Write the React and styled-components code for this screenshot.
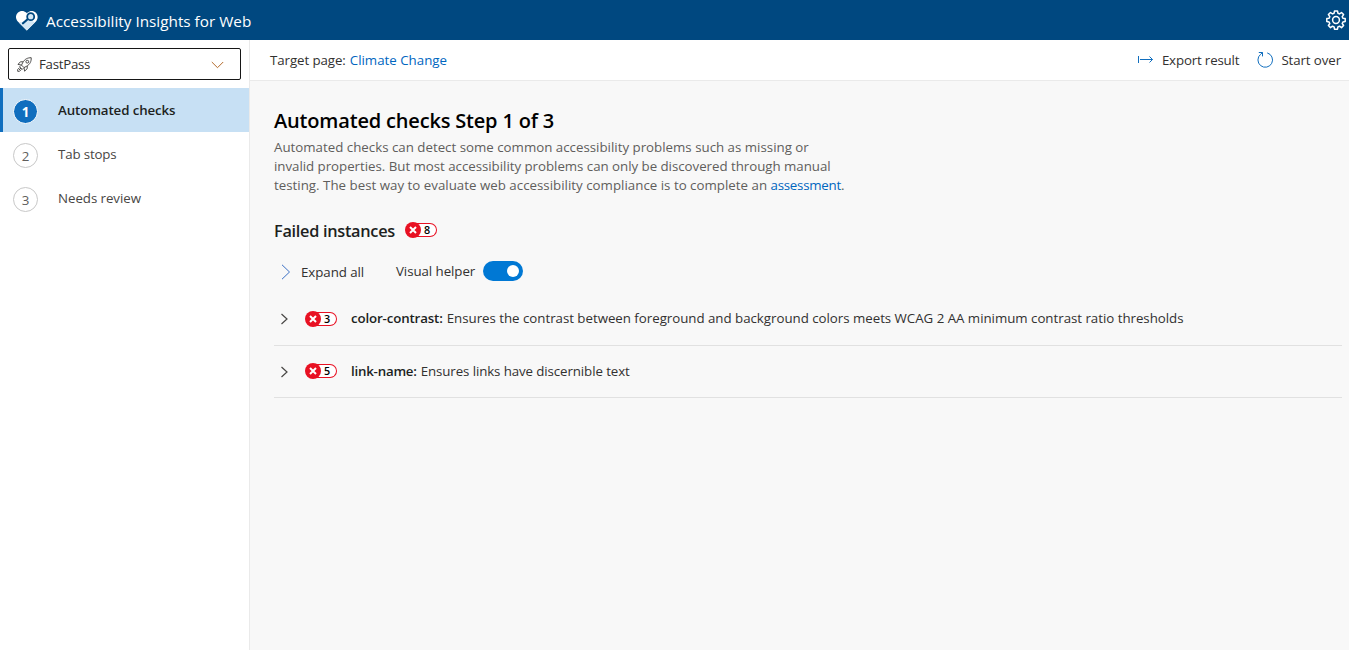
import React from "react";
import styled, { createGlobalStyle } from "styled-components";

const Global = createGlobalStyle`
  * { box-sizing: border-box; }
  html, body { margin: 0; padding: 0; background: #fff; }
  body { font-family: "Open Sans", "Noto Sans", sans-serif; font-size: 13.3px; color: #323130; }
  h1, h2, p, ul, ol { margin: 0; padding: 0; list-style: none; }
  svg { display: block; flex: none; }
`;

/* One run of text: size, weight, tracking and line height vary by use. */
const Text = styled.span`
  font-size: ${(p) => p.$size || 13.3}px;
  font-weight: ${(p) => p.$weight || 400};
  letter-spacing: ${(p) => p.$track || 0}px;
  line-height: ${(p) => p.$line || 20}px;
  color: ${(p) => p.$color || "inherit"};
  white-space: nowrap;
`;

const Page = styled.div`
  display: flex;
  flex-direction: column;
  width: 1349px;
  height: 650px;
  overflow: hidden;
`;
const Header = styled.header`
  display: flex;
  align-items: center;
  flex: none;
  height: 40px;
  padding: 0 3px 0 15px;
  background: #004880;
  color: #fff;
`;
const Brand = styled.div`
  display: flex;
  flex: 1;
  align-items: center;
  gap: 8px;
  padding-top: 2px;
  svg { margin-top: -2px; }
`;
const Body = styled.div`
  display: flex;
  flex: 1;
`;
const Sidebar = styled.nav`
  width: 250px;
  flex: none;
  border-right: 1px solid #eaeaea;
`;
const Select = styled.div`
  display: flex;
  align-items: center;
  height: 32px;
  margin: 8px 8px 8px;
  padding: 0 16px 0 8px;
  border: 1px solid #161616;
  border-radius: 2px;
  gap: 7px;
`;
const SelectLabel = styled.div`
  flex: 1;
  display: flex;
`;
const Step = styled.li`
  display: flex;
  align-items: center;
  height: 44px;
  padding-left: ${(p) => (p.$active ? 10 : 13)}px;
  border-left: ${(p) => (p.$active ? "3px solid #106ebe" : "0")};
  background: ${(p) => (p.$active ? "#c7e0f4" : "transparent")};
  color: ${(p) => (p.$active ? "#201f1e" : "#484644")};
  gap: 20px;
`;
const StepNumber = styled.div`
  display: flex;
  align-items: center;
  justify-content: center;
  width: 25px;
  height: 25px;
  margin-top: 3px;
  border: 1px solid ${(p) => (p.$active ? "#fff" : "#c8c8c8")};
  border-radius: 50%;
  background: ${(p) => (p.$active ? "#106ebe" : "#fff")};
  color: ${(p) => (p.$active ? "#fff" : "#605e5c")};
`;
const Main = styled.main`
  flex: 1;
  display: flex;
  flex-direction: column;
  min-width: 0;
`;
const CommandBar = styled.div`
  display: flex;
  align-items: center;
  height: 41px;
  padding: 0 8px 0 20px;
  border-bottom: 1px solid #eaeaea;
`;
const Target = styled.div`
  flex: 1;
  display: flex;
  gap: 4px;
`;
const Command = styled.div`
  display: flex;
  align-items: center;
  gap: ${(p) => p.$gap || 7}px;
  margin-left: 18px;
`;
const Content = styled.section`
  flex: 1;
  padding: 24px 7px 0 24px;
  background: #f8f8f8;
`;
const Title = styled.h1`
  display: flex;
  height: 33px;
`;
const Description = styled.p`
  display: flex;
  flex-direction: column;
  height: 57px;
`;
const Link = styled.span`
  color: #0066bf;
  letter-spacing: -0.25px;
`;
const Section = styled.h2`
  display: flex;
  align-items: center;
  gap: 10px;
  height: 30px;
  margin-top: 20px;
`;
const SectionLabel = styled.span`
  display: flex;
  padding-top: 2px;
`;
const Pill = styled.span`
  display: flex;
  align-items: center;
  width: 32px;
  height: 16px;
`;
const PillIcon = styled.span`
  position: relative;
  display: flex;
  align-items: center;
  justify-content: center;
  width: 16px;
  height: 16px;
  border-radius: 50%;
  background: #e81123;
`;
const PillCount = styled.span`
  display: flex;
  align-items: center;
  width: 24px;
  height: 14px;
  margin-left: -8px;
  padding-left: 11px;
  border: 1px solid #e81123;
  border-left: 0;
  border-radius: 0 8px 8px 0;
  background: #fff;
  color: #000;
`;
const Tools = styled.div`
  display: flex;
  align-items: center;
  height: 20px;
  margin-top: 16px;
  padding-left: 6.5px;
`;
const Expand = styled.div`
  display: flex;
  align-items: center;
  width: 115.5px;
  gap: 10.5px;
  padding-top: 2px;
`;
const Helper = styled.div`
  display: flex;
  align-items: center;
  gap: 8px;
`;
const Toggle = styled.div`
  display: flex;
  align-items: center;
  justify-content: flex-end;
  width: 40px;
  height: 20px;
  padding-right: 4px;
  border-radius: 10px;
  background: #0078d4;
`;
const Knob = styled.div`
  width: 12px;
  height: 12px;
  border-radius: 50%;
  background: #fff;
`;
const Rules = styled.ul`
  margin-top: 12px;
`;
const Rule = styled.li`
  display: flex;
  align-items: center;
  height: ${(p) => p.$height}px;
  padding-left: 6px;
  border-bottom: 1px solid #e1e1e1;
`;
const RuleBadge = styled.div`
  margin: 0 14px 0 16px;
  padding-bottom: ${(p) => p.$lift || 0}px;
`;
const RuleText = styled.div`
  display: flex;
  gap: 4px;
  padding-bottom: 2px;
`;

const Logo = () => (
  <svg width="23" height="21" viewBox="0 0 23 21">
    <path d="M11.800 20.500 2.800 11.500C.4 9 .4 5.100 2.800 2.700 5.200.4 8.900.4 11.200 2.600l.6.600.8-.7C15 .3 18.600.4 20.900 2.700c2.300 2.400 2.300 6.200 0 8.700Z" fill="#fff" />
    <path d="m3.800 12.500 8 8 8.200-8.200-3.500-1.500-7 .8Z" fill="#d5e8f5" />
    <path d="m8 13.300 5.200-4.600" stroke="#004880" strokeWidth="2.200" strokeLinecap="round" />
    <circle cx="15.700" cy="6.700" r="3.500" fill="#d5e8f5" stroke="#004880" strokeWidth="1.800" />
  </svg>
);
const Gear = () => (
  <svg width="20" height="20" viewBox="0 0 20 20" fill="none" stroke="#fff" strokeWidth="1.500" strokeLinejoin="round">
    <path d="M8.500.9h3l.4 2.300 1.600.7 2-1.400 2.100 2.100-1.400 2 .7 1.600 2.300.4v3l-2.300.4-.7 1.500 1.400 2-2.100 2.100-2-1.400-1.600.7-.4 2.300h-3l-.4-2.300-1.600-.7-2 1.400-2.100-2.100 1.400-2-.7-1.500L.8 11.600v-3l2.300-.4.7-1.600-1.400-2 2.100-2.100 2 1.400 1.600-.7Z" />
    <circle cx="10" cy="10" r="3.400" />
  </svg>
);
const Rocket = () => (
  <svg width="15" height="15" viewBox="0 0 15 15" fill="none" stroke="#3b3a39" strokeWidth="0.900">
    <path d="M14.200.7c-3.600 0-6.500 1.300-8.500 5L4.500 8.100l2.500 2.500 2.500-1.300c3.600-2 4.900-5 4.700-8.600Z" />
    <circle cx="10.300" cy="4.700" r="1.400" />
    <path d="M6.200 4.800H3.400L1 7.400l3.500.7M10.200 8.900v2.800l-2.600 2.500L7 10.600M3.800 8.600l-1.200 1.200 2.600 2.600 1.200-1.200M2.600 10.600.7 12.500v1.800h1.800l1.900-1.900M4 11 2 13" />
  </svg>
);
const Chevron = ({ w, h, d, color, stroke = 1 }) => (
  <svg width={w} height={h} viewBox={`0 0 ${w} ${h}`} fill="none" stroke={color} strokeWidth={stroke}>
    <path d={d} />
  </svg>
);
const ExportIcon = () => (
  <svg width="17" height="10" viewBox="0 0 17 10" fill="none" stroke="#106ebe">
    <path d="M1.500 1v7M3 4.500h12.500M12.500 1.500l3 3-3 3" />
  </svg>
);
const Restart = () => (
  <svg width="17" height="18" viewBox="0 0 17 18" fill="none" stroke="#106ebe">
    <path d="M10.200 1.900A7.300 7.300 0 1 1 3.600 3.300L5.500 1.500M1.800 1.500h3.700v3.900" />
  </svg>
);

const Badge = ({ count }) => (
  <Pill>
    <PillIcon>
      <svg width="8" height="8" viewBox="0 0 8 8" stroke="#fff" strokeWidth="2">
        <path d="m1 1 6 6M7 1 1 7" />
      </svg>
    </PillIcon>
    <PillCount>
      <Text $size={10.8} $weight={600} $line={12}>{count}</Text>
    </PillCount>
  </Pill>
);

const steps = [
  { label: "Automated checks", active: true, track: -0.1 },
  { label: "Tab stops", track: -0.15 },
  { label: "Needs review", track: -0.05 },
];
const rules = [
  { id: "color-contrast", count: 3, text: "Ensures the contrast between foreground and background colors meets WCAG 2 AA minimum contrast ratio thresholds", height: 53, idTrack: -0.14, track: -0.025 },
  { id: "link-name", count: 5, text: "Ensures links have discernible text", height: 52, idTrack: -0.22, lift: 1, track: -0.1 },
];

export default function App() {
  return (
    <Page>
      <Global />
      <Header>
        <Brand>
          <Logo />
          <Text $size={15.3}>Accessibility Insights for Web</Text>
        </Brand>
        <Gear />
      </Header>
      <Body>
        <Sidebar>
          <Select>
            <Rocket />
            <SelectLabel><Text $track={-0.28}>FastPass</Text></SelectLabel>
            <Chevron w={13} h={10} d="M.8 3 6.500 8.700 12.200 3" color="#b36b2c" />
          </Select>
          <ol>
            {steps.map((s, i) => (
              <Step key={s.label} $active={s.active}>
                <StepNumber $active={s.active}>
                  <Text $weight={s.active ? 700 : 400}>{i + 1}</Text>
                </StepNumber>
                <Text $weight={s.active ? 600 : 400} $track={s.track}>{s.label}</Text>
              </Step>
            ))}
          </ol>
        </Sidebar>
        <Main>
          <CommandBar>
            <Target>
              <Text $track={-0.08}>Target page:</Text>
              <Text $color="#0066bf">Climate Change</Text>
            </Target>
            <Command $gap={8}><ExportIcon /><Text $track={-0.16}>Export result</Text></Command>
            <Command><Restart /><Text $track={-0.1}>Start over</Text></Command>
          </CommandBar>
          <Content>
            <Title><Text $size={20} $weight={600} $line={32} $track={-0.18} $color="#000">Automated checks Step 1 of 3</Text></Title>
            <Description>
              <Text $line={19} $color="#605e5c">Automated checks can detect some common accessibility problems such as missing or</Text>
              <Text $line={19} $track={-0.03} $color="#605e5c">invalid properties. But most accessibility problems can only be discovered through manual</Text>
              <Text $line={19} $track={0.012} $color="#605e5c">testing. The best way to evaluate web accessibility compliance is to complete an <Link>assessment</Link>.</Text>
            </Description>
            <Section>
              <SectionLabel>
                <Text $size={16.3} $weight={600} $line={24} $track={-0.28} $color="#201f1e">Failed instances</Text>
              </SectionLabel>
              <Badge count={8} />
            </Section>
            <Tools>
              <Expand>
                <Chevron w={10} h={16} d="M1 .8 8.500 8 1 15.200" color="#3a6fc4" />
                <Text $track={-0.06}>Expand all</Text>
              </Expand>
              <Helper>
                <Text $track={-0.06}>Visual helper</Text>
                <Toggle><Knob /></Toggle>
              </Helper>
            </Tools>
            <Rules>
              {rules.map((r) => (
                <Rule key={r.id} $height={r.height}>
                  <Chevron w={9} h={12} d="M1.500 1 7 6 1.500 11" color="#484644" stroke={1.2} />
                  <RuleBadge $lift={r.lift}><Badge count={r.count} /></RuleBadge>
                  <RuleText>
                    <Text $weight={600} $track={r.idTrack} $color="#201f1e">{r.id}:</Text>
                    <Text $track={r.track}>{r.text}</Text>
                  </RuleText>
                </Rule>
              ))}
            </Rules>
          </Content>
        </Main>
      </Body>
    </Page>
  );
}
